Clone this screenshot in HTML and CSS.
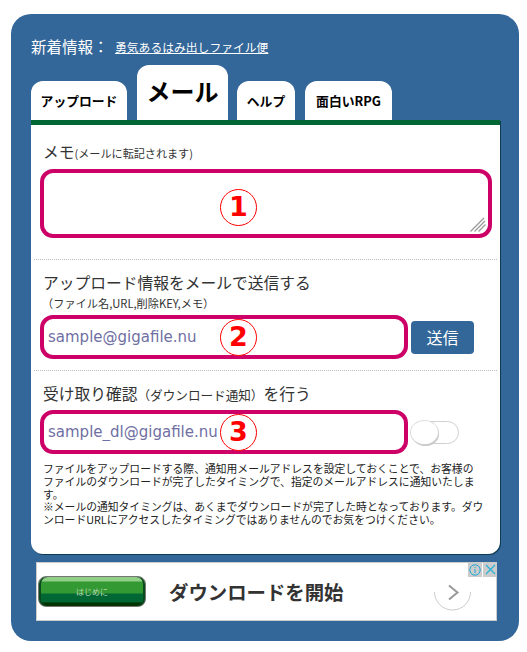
FILE: index.html
```html
<!DOCTYPE html>
<html lang="ja">
<head>
<meta charset="utf-8">
<title>メール</title>
<link rel="stylesheet" href="styles.css">
</head>
<body>
<main class="panel">
  <p class="news"><span class="news-label">新着情報：</span><a class="news-link" href="#">勇気あるはみ出しファイル便</a></p>
  <nav class="tabs">
    <a class="tab tab-upload" href="#">アップロード</a>
    <a class="tab tab-mail" href="#">メール</a>
    <a class="tab tab-help" href="#">ヘルプ</a>
    <a class="tab tab-rpg" href="#">面白いRPG</a>
  </nav>
  <section class="card">
    <div class="section section-memo">
      <h2 class="heading memo-heading">メモ<small class="memo-note">(メールに転記されます)</small></h2>
      <div class="field">
        <textarea class="memo-box"></textarea>
        <svg class="grip" width="16" height="15" viewBox="0 0 16 15"><path d="M0.5 14.5L14 1M4.5 14.5L15 4M8.5 14.5L15.5 7.5" fill="none" stroke="#999999" stroke-width="1.3"/></svg>
        <span class="badge badge-memo">1</span>
      </div>
    </div>
    <div class="section section-send">
      <h2 class="heading">アップロード情報をメールで送信する</h2>
      <p class="subnote">（ファイル名,URL,削除KEY,メモ）</p>
      <div class="row row-send">
        <div class="field">
          <input class="mail-input" type="text" placeholder="sample@gigafile.nu">
          <span class="badge badge-input">2</span>
        </div>
        <button class="send" type="button">送信</button>
      </div>
    </div>
    <div class="section section-confirm">
      <h2 class="heading">受け取り確認<small class="confirm-note">（ダウンロード通知）</small>を行う</h2>
      <div class="row row-confirm">
        <div class="field">
          <input class="mail-input" type="text" placeholder="sample_dl@gigafile.nu">
          <span class="badge badge-input">3</span>
        </div>
        <span class="toggle"><span class="knob"></span></span>
      </div>
      <p class="notice">ファイルをアップロードする際、通知用メールアドレスを設定しておくことで、お客様のファイルのダウンロードが完了したタイミングで、指定のメールアドレスに通知いたします。<br>※メールの通知タイミングは、あくまでダウンロードが完了した時となっております。ダウンロードURLにアクセスしたタイミングではありませんのでお気をつけください。</p>
    </div>
  </section>
  <aside class="ad">
    <span class="ad-button"><span class="ad-button-text">はじめに</span></span>
    <span class="ad-title">ダウンロードを開始</span>
    <svg class="ad-arrow" width="38" height="38" viewBox="0 0 38 38">
      <path d="M0.5 19a18 18 0 0 0 36 0" fill="none" stroke="#cccccc" stroke-width="1"/>
      <path d="M15 12.5l8.5 7-8.5 7" fill="none" stroke="#999999" stroke-width="2"/>
    </svg>
    <span class="ad-marks">
      <span class="ad-mark"><svg width="12" height="12" viewBox="0 0 12 12"><circle cx="6" cy="6" r="5.2" fill="none" stroke="#1ba8d8" stroke-width="1"/><path d="M6 3v1M6 5v4.2" stroke="#1ba8d8" stroke-width="1"/></svg></span>
      <span class="ad-mark"><svg width="11" height="11" viewBox="0 0 11 11"><path d="M1 1l9 9M10 1l-9 9" stroke="#28b4d8" stroke-width="1.3"/></svg></span>
    </span>
  </aside>
</main>
</body>
</html>
```
FILE: styles.css
```css
* { box-sizing: border-box; }
html, body { margin: 0; padding: 0; background: #fff; }
body {
  width: 527px;
  height: 652px;
  overflow: hidden;
  font-family: "Noto Sans CJK JP", "Noto Sans", sans-serif;
  color: #333;
}
.panel {
  width: 508px;
  height: 627px;
  margin: 14px 0 0 11px;
  padding: 22px 20px 0;
  background: #336699;
  border-radius: 20px;
}
.news {
  margin: 0;
  height: 20px;
  display: flex;
  align-items: center;
  color: #fff;
}
.news-label { font-size: 15.5px; width: 84px; white-space: nowrap; }
.news-link { font-size: 11.8px; color: #fff; text-decoration: underline; white-space: nowrap; }
.tabs {
  display: flex;
  align-items: flex-end;
  height: 55px;
  margin-top: 9px;
}
.tab {
  display: flex;
  align-items: center;
  justify-content: center;
  background: #fff;
  border-radius: 12px 12px 0 0;
  color: #000;
  text-decoration: none;
  font-weight: 700;
  font-size: 12.8px;
  height: 39px;
  white-space: nowrap;
}
.tab-upload { width: 96px; margin-right: 10px; }
.tab-mail { width: 91px; height: 55px; margin-right: 9px; font-size: 24px; padding-bottom: 5px; }
.tab-help { width: 58px; margin-right: 10px; }
.tab-rpg { width: 87px; }
.card {
  width: 469px;
  height: 434px;
  background: #fff;
  border-top: 5px solid #006633;
  border-radius: 0 0 12px 12px;
  box-shadow: 1px 1px 0 #0d3b52;
  padding: 0 3px;
}
.section { padding: 0 6px; border-top: 1px dotted #bbbbbb; }
.section:first-child { border-top: 0; height: 134px; padding-top: 17px; }
.section-send { height: 111px; padding-top: 13px; }
.section-confirm { padding-top: 13px; }
.heading {
  margin: 0;
  font-weight: 400;
  font-size: 15.75px;
  line-height: 20px;
  padding-left: 3px;
  color: #333;
  white-space: nowrap;
}
.memo-heading { height: 27px; }
.memo-note { font-size: 11.1px; }
.confirm-note { font-size: 12.6px; }
.subnote {
  margin: 3px 0 0;
  font-size: 11.2px;
  line-height: 14px;
  padding-left: 2px;
  white-space: nowrap;
}
.field { position: relative; display: block; }
.grip {
  position: absolute;
  right: 5px;
  bottom: 6px;
  pointer-events: none;
}
.memo-box {
  display: block;
  width: 452px;
  height: 69px;
  border: 4px solid #cc0066;
  border-radius: 13px;
  background: #fff;
  outline: none;
  margin: 0;
  resize: none;
}
.row { display: flex; align-items: center; gap: 3px; }
.row-send { margin-top: 5px; }
.row-confirm { margin-top: 5px; }
.mail-input {
  display: block;
  width: 368px;
  height: 44px;
  border: 4px solid #cc0066;
  border-radius: 13px;
  background: #fff;
  padding: 0 0 0 4px;
  margin: 0;
  outline: none;
  font-family: "DejaVu Sans", sans-serif;
  font-size: 15px;
}
.mail-input::placeholder { color: #6f6fa3; opacity: 1; }
.badge {
  position: absolute;
  left: 180px;
  width: 37px;
  height: 37px;
  border: 1.5px solid #ff0000;
  border-radius: 50%;
  background: #fff;
  color: #ff0000;
  font-family: "DejaVu Sans", sans-serif;
  font-weight: 700;
  font-size: 27px;
  line-height: 34px;
  text-align: center;
}
.badge-memo { top: 20px; }
.badge-input { top: 4px; }
.send {
  width: 63px;
  height: 33px;
  border: 0;
  border-radius: 4px;
  background: #336699;
  color: #fff;
  font-family: inherit;
  font-size: 16px;
  padding: 0;
}
.toggle {
  position: relative;
  display: block;
  width: 48px;
  height: 23px;
  border: 1px solid #d0d0d0;
  border-radius: 12px;
  background: #fff;
}
.knob {
  position: absolute;
  left: -1px;
  top: -1px;
  width: 27px;
  height: 23px;
  border-radius: 50%;
  background: #fff;
  box-shadow: 1px 2px 0 #cccccc, 0 0 0 1px #dddddd;
}
.notice {
  margin: 8px 0 0;
  padding-left: 3px;
  width: 448px;
  font-size: 10.8px;
  line-height: 12.8px;
  color: #222;
  line-break: strict;
  text-spacing-trim: space-all;
}
.ad {
  position: relative;
  display: flex;
  align-items: center;
  width: 461px;
  height: 59px;
  margin: 8px 0 0 5px;
  background: #fff;
  border: 1px solid #cccccc;
  padding-left: 1px;
}
.ad-button {
  display: flex;
  align-items: center;
  justify-content: center;
  flex: none;
  width: 108px;
  height: 31px;
  border-radius: 8px;
  border: 1px solid #777;
  background: linear-gradient(#8fcf86 0, #8fcf86 4px, #339933 5px, #339933 16px, #006633 17px, #006633 25px, #003300 26px);
  box-shadow: inset 2px 0 0 #0a4a1e, inset -2px 0 0 #0a4a1e;
}
.ad-button-text { font-size: 8px; color: #b8d8b0; }
.ad-title {
  margin-left: 23px;
  font-size: 19.4px;
  font-weight: 700;
  color: #333;
  white-space: nowrap;
}
.ad-arrow { margin-left: 90px; }
.ad-marks { position: absolute; top: -1px; right: -1px; display: flex; gap: 1px; }
.ad-mark {
  display: flex;
  align-items: center;
  justify-content: center;
  width: 14px;
  height: 15px;
  background: #cccccc;
}
```
